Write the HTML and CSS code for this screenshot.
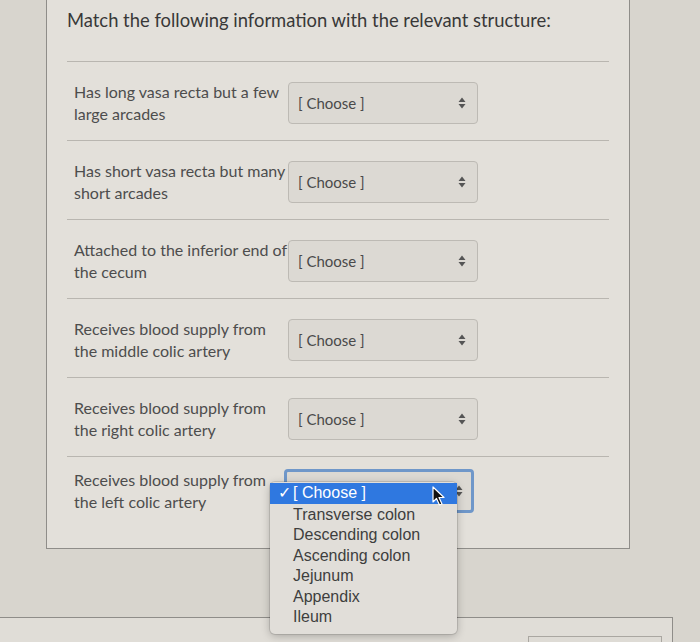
FILE: index.html
```html
<!DOCTYPE html>
<html>
<head>
<meta charset="utf-8">
<link rel="stylesheet" href="styles.css">
</head>
<body>
<div class="page">
  <div class="card">
    <h1 class="title">Match the following information with the relevant structure:</h1>
    <div class="rows">
      <div class="row">
        <div class="label">Has long vasa recta but a few large arcades</div>
        <div class="select"><span>[ Choose ]</span><span class="arrows"><svg width="8" height="12" viewBox="0 0 8 12"><path d="M4 0.5 L7.5 5 H0.5 Z M4 11.5 L7.5 7 H0.5 Z" fill="#555"/></svg></span></div>
      </div>
      <div class="row">
        <div class="label">Has short vasa recta but many short arcades</div>
        <div class="select"><span>[ Choose ]</span><span class="arrows"><svg width="8" height="12" viewBox="0 0 8 12"><path d="M4 0.5 L7.5 5 H0.5 Z M4 11.5 L7.5 7 H0.5 Z" fill="#555"/></svg></span></div>
      </div>
      <div class="row">
        <div class="label">Attached to the inferior end of the cecum</div>
        <div class="select"><span>[ Choose ]</span><span class="arrows"><svg width="8" height="12" viewBox="0 0 8 12"><path d="M4 0.5 L7.5 5 H0.5 Z M4 11.5 L7.5 7 H0.5 Z" fill="#555"/></svg></span></div>
      </div>
      <div class="row">
        <div class="label">Receives blood supply from the middle colic artery</div>
        <div class="select"><span>[ Choose ]</span><span class="arrows"><svg width="8" height="12" viewBox="0 0 8 12"><path d="M4 0.5 L7.5 5 H0.5 Z M4 11.5 L7.5 7 H0.5 Z" fill="#555"/></svg></span></div>
      </div>
      <div class="row">
        <div class="label">Receives blood supply from the right colic artery</div>
        <div class="select"><span>[ Choose ]</span><span class="arrows"><svg width="8" height="12" viewBox="0 0 8 12"><path d="M4 0.5 L7.5 5 H0.5 Z M4 11.5 L7.5 7 H0.5 Z" fill="#555"/></svg></span></div>
      </div>
      <div class="row last">
        <div class="label">Receives blood supply from the left colic artery</div>
        <div class="select focused"><span></span><span class="arrows"><svg width="8" height="12" viewBox="0 0 8 12"><path d="M4 0.5 L7.5 5 H0.5 Z M4 11.5 L7.5 7 H0.5 Z" fill="#555"/></svg></span>
          <div class="menu">
            <div class="opt selected"><span class="check">✓</span>[ Choose ]</div>
            <div class="opt">Transverse colon</div>
            <div class="opt">Descending colon</div>
            <div class="opt">Ascending colon</div>
            <div class="opt">Jejunum</div>
            <div class="opt">Appendix</div>
            <div class="opt">Ileum</div>
            <svg class="cursor" width="14" height="20" viewBox="0 0 14 20"><path d="M1 1 L1 16 L4.5 12.5 L7.5 19 L10 18 L7 11.5 L12 11.5 Z" fill="#111" stroke="#fff" stroke-width="1.2" stroke-linejoin="round"/></svg>
          </div>
        </div>
      </div>
    </div>
  </div>
  <div class="next">
    <div class="next-box"></div>
  </div>
</div>
</body>
</html>
```

FILE: styles.css
```css
html, body {
  margin: 0;
  padding: 0;
}
body {
  background: #d8d5ce;
  font-family: Lato, "Open Sans", sans-serif;
  color: #4b4b4b;
  width: 700px;
  height: 642px;
  overflow: hidden;
}
.card {
  margin-left: 46px;
  width: 584px;
  background: #e3e0da;
  border: 1px solid #8f8d89;
  border-top: none;
  padding: 0 20px 35px 20px;
  box-sizing: border-box;
}
.title {
  margin: 0;
  padding-top: 7px;
  height: 61px;
  box-sizing: border-box;
  font-size: 18.4px;
  font-weight: 400;
  color: #383838;
  line-height: 26px;
}
.row {
  border-top: 1px solid #b9b6b0;
  display: flex;
  align-items: center;
  padding: 20px 0 16px 7px;
  height: 42px;
}
.row.last {
  padding-bottom: 0;
  padding-top: 12px;
  height: 44px;
}
.label {
  width: 214px;
  font-size: 16px;
  line-height: 22px;
  color: #4d4d4d;
}
.select {
  position: relative;
  width: 190px;
  height: 42px;
  box-sizing: border-box;
  border: 1px solid #bdbab4;
  border-radius: 4px;
  background: #dcd9d3;
  display: flex;
  align-items: center;
  justify-content: space-between;
  padding: 0 11px 0 9px;
  font-size: 15px;
  color: #4a4a4a;
}
.arrows {
  display: flex;
  align-items: center;
}
.select.focused {
  border: 3px solid #6f97c9;
  height: 44px;
  margin-left: -4px;
  padding-right: 8px;
}
.menu {
  position: absolute;
  left: -17px;
  top: 10px;
  width: 187px;
  padding: 1px 0 6px 0;
  background: #e1ded9;
  border-radius: 5px;
  box-shadow: 0 2px 8px rgba(0,0,0,0.25), 0 0 0 1px rgba(0,0,0,0.1);
  font-family: "Liberation Sans", Arial, sans-serif;
  font-size: 16px;
  color: #3e3e3e;
  z-index: 2;
}
.opt {
  height: 20.5px;
  line-height: 20.5px;
  padding-left: 23px;
  white-space: nowrap;
}
.opt.selected {
  background: #2f78e0;
  color: #fff;
  padding-left: 8px;
  margin-bottom: 1px;
}
.check {
  display: inline-block;
  width: 15px;
}
.cursor {
  position: absolute;
  left: 162px;
  top: 4px;
}
.next {
  margin-top: 68px;
  margin-left: -1px;
  width: 673px;
  height: 30px;
  border-top: 1px solid #8f8d89;
  border-right: 1px solid #8f8d89;
  background: #e0ddd7;
}
.next-box {
  margin-left: 529px;
  margin-top: 18px;
  width: 132px;
  height: 12px;
  border: 1px solid #aaa7a1;
  border-bottom: none;
  background: #dedbd5;
}
```
